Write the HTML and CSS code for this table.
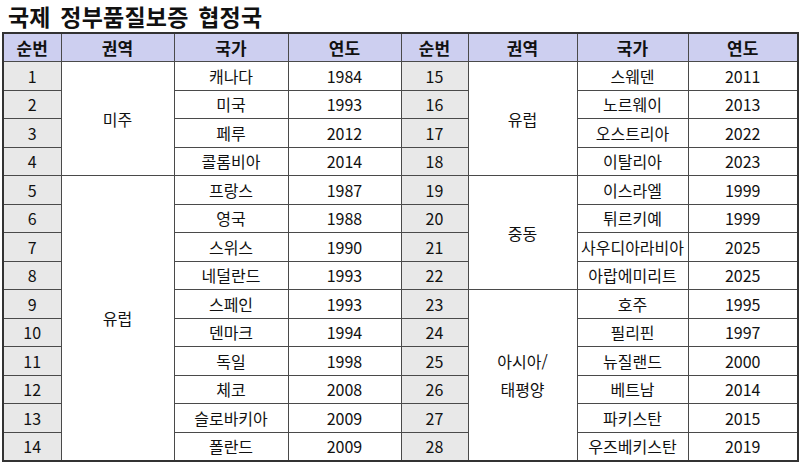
FILE: index.html
```html
<!DOCTYPE html>
<html lang="ko">
<head>
<meta charset="utf-8">
<link rel="stylesheet" href="styles.css">
</head>
<body>
<h1 class="title">국제 정부품질보증 협정국</h1>
<table class="grid">
  <colgroup>
    <col class="c-no"><col class="c-reg"><col class="c-cty"><col class="c-yr">
    <col class="c-no2"><col class="c-reg2"><col class="c-cty2"><col class="c-yr2">
  </colgroup>
  <thead>
    <tr class="head"><th>순번</th><th>권역</th><th>국가</th><th>연도</th><th>순번</th><th>권역</th><th>국가</th><th>연도</th></tr>
  </thead>
  <tbody>
    <tr><td class="no">1</td><td class="reg" rowspan="4">미주</td><td>캐나다</td><td>1984</td><td class="no">15</td><td class="reg" rowspan="4">유럽</td><td>스웨덴</td><td>2011</td></tr>
    <tr><td class="no">2</td><td>미국</td><td>1993</td><td class="no">16</td><td>노르웨이</td><td>2013</td></tr>
    <tr><td class="no">3</td><td>페루</td><td>2012</td><td class="no">17</td><td>오스트리아</td><td>2022</td></tr>
    <tr><td class="no">4</td><td>콜롬비아</td><td>2014</td><td class="no">18</td><td>이탈리아</td><td>2023</td></tr>
    <tr><td class="no">5</td><td class="reg" rowspan="10">유럽</td><td>프랑스</td><td>1987</td><td class="no">19</td><td class="reg" rowspan="4">중동</td><td>이스라엘</td><td>1999</td></tr>
    <tr><td class="no">6</td><td>영국</td><td>1988</td><td class="no">20</td><td>튀르키예</td><td>1999</td></tr>
    <tr><td class="no">7</td><td>스위스</td><td>1990</td><td class="no">21</td><td>사우디아라비아</td><td>2025</td></tr>
    <tr><td class="no">8</td><td>네덜란드</td><td>1993</td><td class="no">22</td><td>아랍에미리트</td><td>2025</td></tr>
    <tr><td class="no">9</td><td>스페인</td><td>1993</td><td class="no">23</td><td class="reg" rowspan="6">아시아/<br>태평양</td><td>호주</td><td>1995</td></tr>
    <tr><td class="no">10</td><td>덴마크</td><td>1994</td><td class="no">24</td><td>필리핀</td><td>1997</td></tr>
    <tr><td class="no">11</td><td>독일</td><td>1998</td><td class="no">25</td><td>뉴질랜드</td><td>2000</td></tr>
    <tr><td class="no">12</td><td>체코</td><td>2008</td><td class="no">26</td><td>베트남</td><td>2014</td></tr>
    <tr><td class="no">13</td><td>슬로바키아</td><td>2009</td><td class="no">27</td><td>파키스탄</td><td>2015</td></tr>
    <tr><td class="no">14</td><td>폴란드</td><td>2009</td><td class="no">28</td><td>우즈베키스탄</td><td>2019</td></tr>
  </tbody>
</table>
</body>
</html>
```
FILE: styles.css
```css
html, body {
  margin: 0;
  padding: 0;
  background: #ffffff;
}
body {
  font-family: "Noto Sans CJK KR", "Noto Sans", sans-serif;
  color: #111;
  padding: 0 2px;
}
.title {
  margin: 0;
  padding: 2px 0 0 6px;
  height: 32px;
  box-sizing: border-box;
  font-size: 23px;
  font-weight: 700;
  line-height: 28px;
  letter-spacing: 0.2px;
  word-spacing: 3px;
}
.grid {
  border-collapse: collapse;
  table-layout: fixed;
  width: 796px;
  margin-top: 0;
  border: 2px solid #333;
}
.c-no { width: 58px; }
.c-reg { width: 113px; }
.c-cty { width: 114px; }
.c-yr { width: 113px; }
.c-no2 { width: 67px; }
.c-reg2 { width: 109px; }
.c-cty2 { width: 111px; }
.c-yr2 { width: 110px; }
.grid th, .grid td {
  border: 1px solid #4a4a4a;
  padding: 0;
  text-align: center;
  vertical-align: middle;
  font-size: 16px;
  line-height: 18px;
  white-space: nowrap;
}
.head th {
  height: 27px;
  background: #cdcff0;
  font-weight: 700;
  font-size: 17px;
  color: #111;
}
.grid tbody tr {
  height: 28.5px;
}
.grid td.no {
  background: #e8e8e8;
}
.grid td.reg {
  line-height: 28px;
}
```
